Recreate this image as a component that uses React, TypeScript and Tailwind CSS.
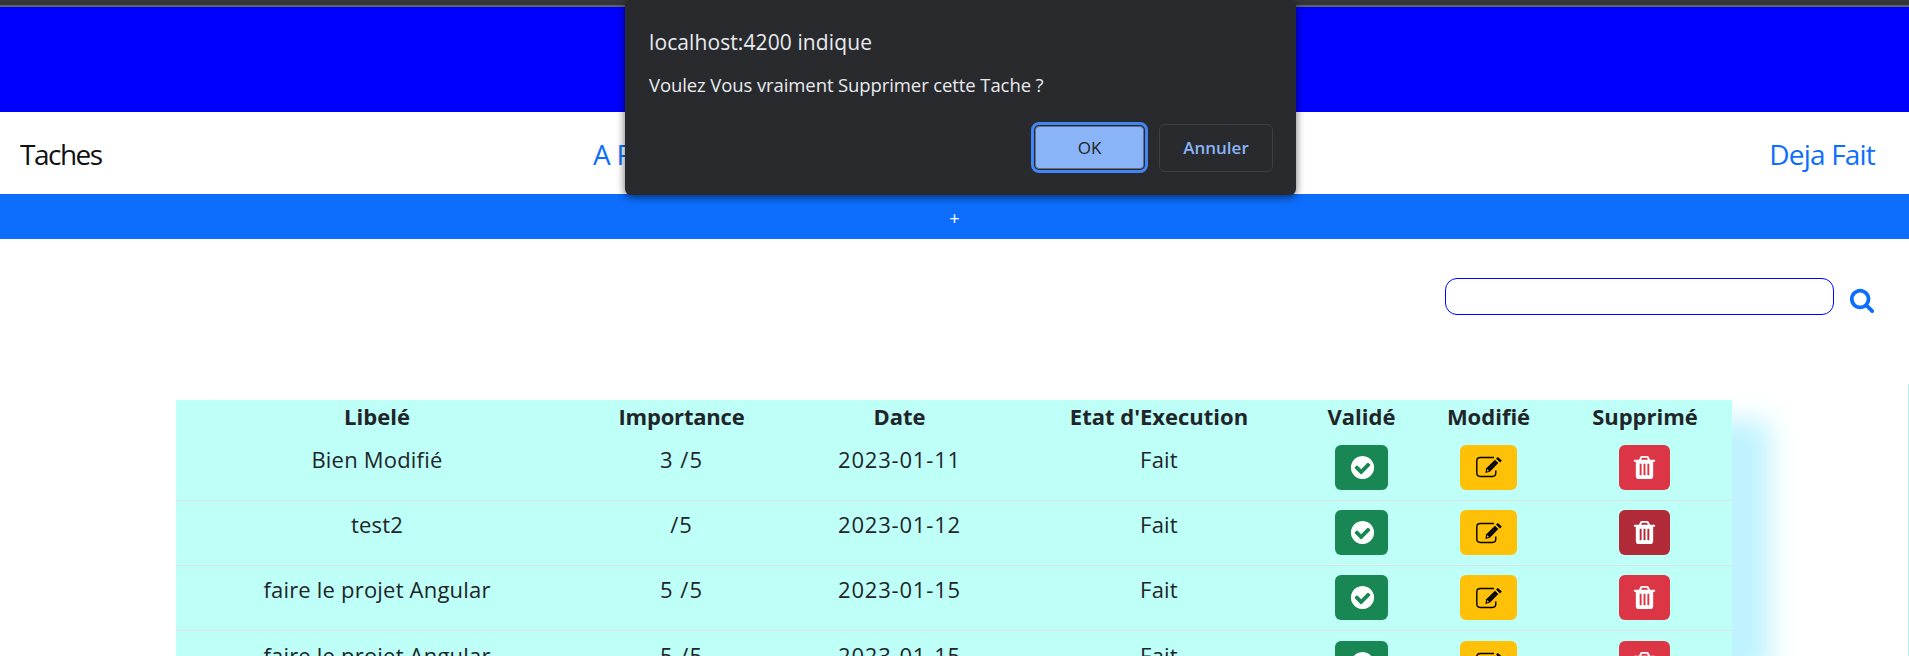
import React from "react";

const ICONS = {
  search:
    "M1216 832q0-185-131.5-316.5t-316.5-131.5-316.5 131.5-131.5 316.5 131.5 316.5 316.5 131.5 316.5-131.5 131.5-316.5zm512 832q0 52-38 90t-90 38q-54 0-90-38l-343-342q-179 124-399 124-143 0-273.5-55.5t-225-150-150-225-55.5-273.5 55.5-273.5 150-225 225-150 273.5-55.5 273.5 55.5 225 150 150 225 55.5 273.5q0 220-124 399l343 343q37 37 37 90z",
  check:
    "M1412 734q0-28-18-46l-91-90q-19-19-45-19t-45 19l-408 407-226-226q-19-19-45-19t-45 19l-91 90q-18 18-18 46 0 27 18 45l362 362q19 19 45 19 27 0 46-19l543-543q18-18 18-45zm252 162q0 209-103 385.5t-279.5 279.5-385.5 103-385.5-103-279.5-279.5-103-385.5 103-385.5 279.5-279.5 385.5-103 385.5 103 279.5 279.5 103 385.5z",
  trash:
    "M704 1376v-704q0-14-9-23t-23-9h-64q-14 0-23 9t-9 23v704q0 14 9 23t23 9h64q14 0 23-9t9-23zm256 0v-704q0-14-9-23t-23-9h-64q-14 0-23 9t-9 23v704q0 14 9 23t23 9h64q14 0 23-9t9-23zm256 0v-704q0-14-9-23t-23-9h-64q-14 0-23 9t-9 23v704q0 14 9 23t23 9h64q14 0 23-9t9-23zm-544-992h448l-48-117q-7-9-17-11h-317q-10 2-17 11zm928 32v64q0 14-9 23t-23 9h-96v948q0 83-47 143.5t-113 60.5h-832q-66 0-113-58.5t-47-141.5v-952h-96q-14 0-23-9t-9-23v-64q0-14 9-23t23-9h309l70-167q15-37 54-63t79-26h320q40 0 79 26t54 63l70 167h309q14 0 23 9t9 23z",
};

function Icon({ name, className }: { name: keyof typeof ICONS; className: string }) {
  return (
    <svg viewBox="0 0 1792 1792" fill="currentColor" className={className}>
      <path d={ICONS[name]} />
    </svg>
  );
}

function EditIcon() {
  return (
    <svg viewBox="0 0 26 22" className="h-[22px] w-[26px] shrink-0" fill="none">
      <path
        d="M18 1.5H4.2Q.8 1.5 .8 4.9V17.1Q.8 20.5 4.2 20.5H16.4Q19.8 20.5 19.8 17.1V14.5"
        stroke="#000"
        strokeWidth="1.4"
      />
      <path d="M10.3 12.3L19 3.8L22.3 7.1L13.8 15.8L9.4 17Z" fill="#000" />
      <path d="M20 2.6L21.8 1L25.8 4.4L24 6.4Z" fill="#000" />
      <path d="M11.3 13L13.1 14.9L10.9 15.6Z" fill="#ffc107" />
      <path d="M13.5 12.6L19 7.1" stroke="#ffc107" strokeOpacity="0.35" strokeWidth="0.6" />
    </svg>
  );
}

type Task = { label: string; importance: string; date: string; state: string; active?: boolean };

const TASKS: Task[] = [
  { label: "Bien Modifié", importance: "3 /5", date: "2023-01-11", state: "Fait" },
  { label: "test2", importance: "/5", date: "2023-01-12", state: "Fait", active: true },
  { label: "faire le projet Angular", importance: "5 /5", date: "2023-01-15", state: "Fait" },
  { label: "faire le projet Angular", importance: "5 /5", date: "2023-01-15", state: "Fait" },
];

const GRID = "grid grid-cols-[402px_207px_229px_290px_115px_139px_174px] justify-items-center";

function Row({ task }: { task: Task }) {
  return (
    <div className={`${GRID} h-[65.33px] shrink-0 border-b border-[#dee2e6] pt-[9.6px] leading-[29px]`}>
      <span className="tracking-[0.2px]">{task.label}</span>
      <span className="tracking-[1px]">{task.importance}</span>
      <span className="tracking-[0.8px]">{task.date}</span>
      <span className="tracking-[0.2px]">{task.state}</span>
      <button className="flex h-[45px] w-[53px] items-center justify-center rounded-md bg-[#198754] text-white">
        <Icon name="check" className="ml-px size-[27px]" />
      </button>
      <button className="flex h-[45px] w-[57px] items-center justify-center rounded-md bg-[#ffc107]">
        <EditIcon />
      </button>
      <button
        className={`mr-[2px] flex h-[45px] w-[51px] items-center justify-center rounded-md text-white ${task.active ? "bg-[#b02a37]" : "bg-[#dc3545]"}`}
      >
        <Icon name="trash" className="size-[27px]" />
      </button>
    </div>
  );
}

function ConfirmDialog() {
  return (
    <div className="absolute left-[625px] top-0 flex h-[195px] w-[671px] flex-col rounded-md bg-[#292a2d] pl-6 pr-[23px] pt-7 font-['Open_Sans',sans-serif] text-[#e8eaed] shadow-[0_2px_8px_rgba(0,0,0,0.6)]">
      <div className="h-[29px] text-[21px] leading-[29px] tracking-[0.1px]">
        <span>localhost:4200 indique</span>
      </div>
      <div className="mt-[14px] h-[28px] text-[18.5px] leading-[28px] tracking-[-0.1px]">
        <span>Voulez Vous vraiment Supprimer cette Tache ?</span>
      </div>
      <div className="mt-[23px] flex items-center justify-end gap-[11px]">
        <button className="flex h-[51px] w-[117px] items-center justify-center rounded-lg border-[3px] border-[#4285f4] p-px">
          <span className="flex h-full w-full items-center justify-center rounded border border-[#5f6f8c] bg-[#8ab4f8] text-[17px] font-medium text-[#202124]">
            OK
          </span>
        </button>
        <button className="flex h-12 w-[114px] items-center justify-center rounded-md border border-[#3c4043] text-[17px] font-semibold text-[#8ab4f8]">
          <span>Annuler</span>
        </button>
      </div>
    </div>
  );
}

export default function App() {
  return (
    <div className="relative flex h-[656px] w-full flex-col overflow-hidden bg-white font-['Open_Sans',sans-serif] text-[#212529]">
      <div className="h-[7px] shrink-0 border-b-2 border-[#5f6368] bg-[#35363a]" />
      <header className="h-[105px] shrink-0 bg-[#0000ff]" />
      <nav className="flex h-[82px] shrink-0 items-center pl-5 pr-[34px] pt-px text-[28px] font-normal">
        <div className="w-[573px] tracking-[-1.5px] text-[#111]">
          <span>Taches</span>
        </div>
        <a className="tracking-[-0.7px] text-[#0d6efd]">A Faire</a>
        <a className="ml-auto tracking-[-0.8px] text-[#0d6efd]">Deja Fait</a>
      </nav>
      <button className="h-[45px] shrink-0 bg-[#0d6efd] pt-1 text-[18px] text-white">+</button>
      <div className="flex h-[145px] shrink-0 justify-end pr-[34px] pt-[39px]">
        <input className="h-[37px] w-[389px] rounded-xl border border-[#0000ff] bg-white" />
        <Icon name="search" className="ml-[15px] mt-[9px] size-[26px] text-[#0d6efd]" />
      </div>
      <div className="flex min-h-0 flex-1 justify-between">
        <main className="ml-[176px] mt-4 flex w-[1556px] flex-col bg-[#befff8] text-[22px] shadow-[38px_20px_25px_#bff3ff]">
          <div className={`${GRID} h-[35.2px] shrink-0 font-bold leading-[32px]`}>
            <span>Libelé</span>
            <span className="tracking-[-0.2px]">Importance</span>
            <span>Date</span>
            <span>Etat d'Execution</span>
            <span>Validé</span>
            <span>Modifié</span>
            <span>Supprimé</span>
          </div>
          {TASKS.map((task, i) => (
            <Row key={i} task={task} />
          ))}
        </main>
        <div className="w-px bg-[#b5f3fb]" />
      </div>
      <ConfirmDialog />
    </div>
  );
}
